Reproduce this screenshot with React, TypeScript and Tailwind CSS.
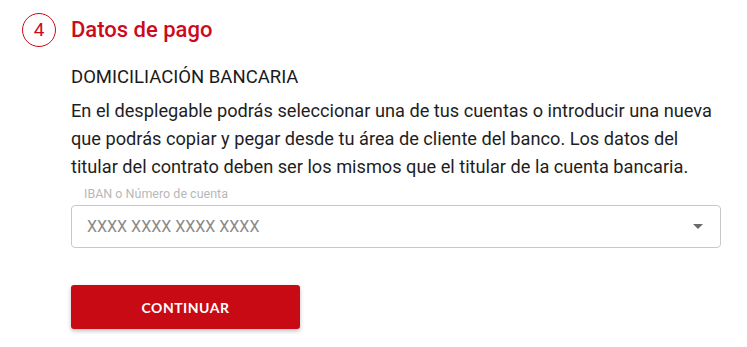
export default function App() {
  return (
    <div className="w-[747px] h-[347px] bg-white font-['Roboto',sans-serif] overflow-hidden">
      <div className="flex items-center gap-[15px] pl-[22px] pt-[13px]">
        <div className="w-[34px] h-[34px] rounded-full border-[1.5px] border-[#cc0a1b] flex items-center justify-center text-[#cc0a1b] text-[19px]">
          4
        </div>
        <h2 className="text-[22px] font-medium text-[#cc0a1b] leading-none">Datos de pago</h2>
      </div>

      <div className="pl-[71px] w-[722px]">
        <h3 className="mt-[19px] text-[18.5px] text-[#1a1a1a] leading-[22px]">DOMICILIACIÓN BANCARIA</h3>
        <p className="mt-[9px] text-[18.2px] leading-[28px] text-[#1e1e1e]">
          En el desplegable podrás seleccionar una de tus cuentas o introducir una nueva que podrás copiar y pegar desde
          tu área de cliente del banco. Los datos del titular del contrato deben ser los mismos que el titular de la
          cuenta bancaria.
        </p>

        <div className="mt-[6px] pl-[13px] text-[12.5px] text-[#b8b8b8] leading-[14px]">IBAN o Número de cuenta</div>
        <div className="mt-[4px] w-[650px] h-[43px] border border-[#c8c8c8] rounded-[4px] flex items-center justify-between pl-[15px] pr-[17px]">
          <span className="text-[16px] text-[#8a8a8a]">XXXX XXXX XXXX XXXX</span>
          <svg width="10" height="5" viewBox="0 0 10 5">
            <path d="M0 0h10L5 5z" fill="#6b6b6b" />
          </svg>
        </div>

        <button className="mt-[37px] w-[229px] h-[44px] bg-[#c80a14] rounded-[3px] shadow-[0_2px_4px_rgba(0,0,0,0.25)] text-white text-[14px] font-bold tracking-[0.5px] font-['Lato',sans-serif]">
          CONTINUAR
        </button>
      </div>
    </div>
  );
}
